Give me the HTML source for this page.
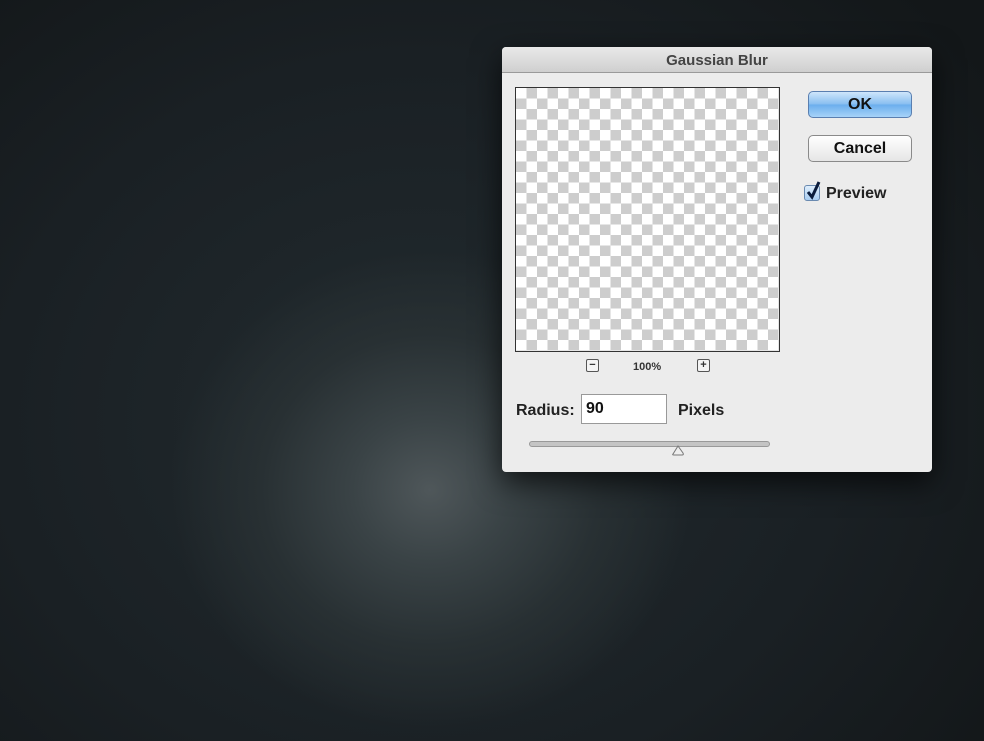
<!DOCTYPE html>
<html><head><style>
html,body{margin:0;padding:0}
body{width:984px;height:741px;overflow:hidden;position:relative;font-family:"Liberation Sans",sans-serif;
background:radial-gradient(ellipse 260px 240px at 430px 490px,#4f575a 0%,#3a4346 30%,#283033 65%,rgba(30,37,41,0) 100%),radial-gradient(ellipse 700px 600px at 420px 420px,#222b2f 0%,#1a2024 60%,#131719 100%);}
.dlg{position:absolute;left:502px;top:47px;width:430px;height:425px;background:#ececec;border-radius:4px;box-shadow:0 10px 30px rgba(0,0,0,.7);overflow:hidden}
.tb{height:25px;background:linear-gradient(#e9e9e9,#cfcfcf);border-bottom:1px solid #9a9a9a;text-align:center;font-size:15px;line-height:27px;color:#444;font-weight:bold}
.pv{position:absolute;left:13px;top:40px;width:263px;height:263px;border:1px solid #333;
background-color:#fff;background-image:linear-gradient(45deg,#cdcdcd 25%,transparent 25%,transparent 75%,#cdcdcd 75%),linear-gradient(45deg,#cdcdcd 25%,transparent 25%,transparent 75%,#cdcdcd 75%);background-size:21px 21px;background-position:0 0,10.5px 10.5px}
.btn{position:absolute;left:306px;width:102px;height:25px;border-radius:5px;border:1px solid #8a8a8a;text-align:center;font-size:16px;line-height:25px;color:#111;background:linear-gradient(#fff,#e6e6e6);font-weight:bold}
.ok{top:44px;background:linear-gradient(#cfe6fb,#86bdf0 50%,#6aaeed 51%,#a6d3f8);border-color:#5a7fb0}
.cancel{top:88px}
.sm{position:absolute;top:312px;width:11px;height:11px;border:1px solid #555;border-radius:2px;font-size:11px;line-height:10px;text-align:center;color:#333;background:#f4f4f4;font-weight:bold}
.t{position:absolute;font-size:16px;color:#222;font-weight:bold}
</style></head><body>
<div class="dlg">
<div class="tb">Gaussian Blur</div>
<div class="pv"></div>
<div class="btn ok">OK</div>
<div class="btn cancel">Cancel</div>
<div style="position:absolute;left:302px;top:138px;width:14px;height:14px;border:1px solid #6a8ab0;border-radius:3px;background:linear-gradient(#dfeefc,#a8cdf2)"></div>
<svg style="position:absolute;left:302px;top:132px" width="20" height="22"><path d="M4 13 L8 18 L15 3" stroke="#0b1c3c" stroke-width="3" fill="none"/></svg>
<div class="t" style="left:324px;top:138px">Preview</div>
<div class="sm" style="left:84px">−</div>
<div style="position:absolute;left:131px;top:314px;font-size:11px;color:#333;font-weight:bold">100%</div>
<div class="sm" style="left:195px">+</div>
<div class="t" style="left:14px;top:355px">Radius:</div>
<div style="position:absolute;left:79px;top:347px;border:1px solid #999;background:#fff;font-size:16px;line-height:28px;padding-left:4px;box-sizing:border-box;width:86px;height:30px;color:#111;font-weight:bold">90</div>
<div class="t" style="left:176px;top:355px">Pixels</div>
<div style="position:absolute;left:27px;top:394px;width:239px;height:4px;border:1px solid #999;border-radius:3px;background:#c4c4c4"></div>
<svg style="position:absolute;left:169px;top:397px" width="14" height="12"><path d="M2 10 Q1 11 3 11 L11 11 Q13 11 12 9 L7 2 Z" fill="#eee" stroke="#777"/></svg>
</div>
</body></html>
